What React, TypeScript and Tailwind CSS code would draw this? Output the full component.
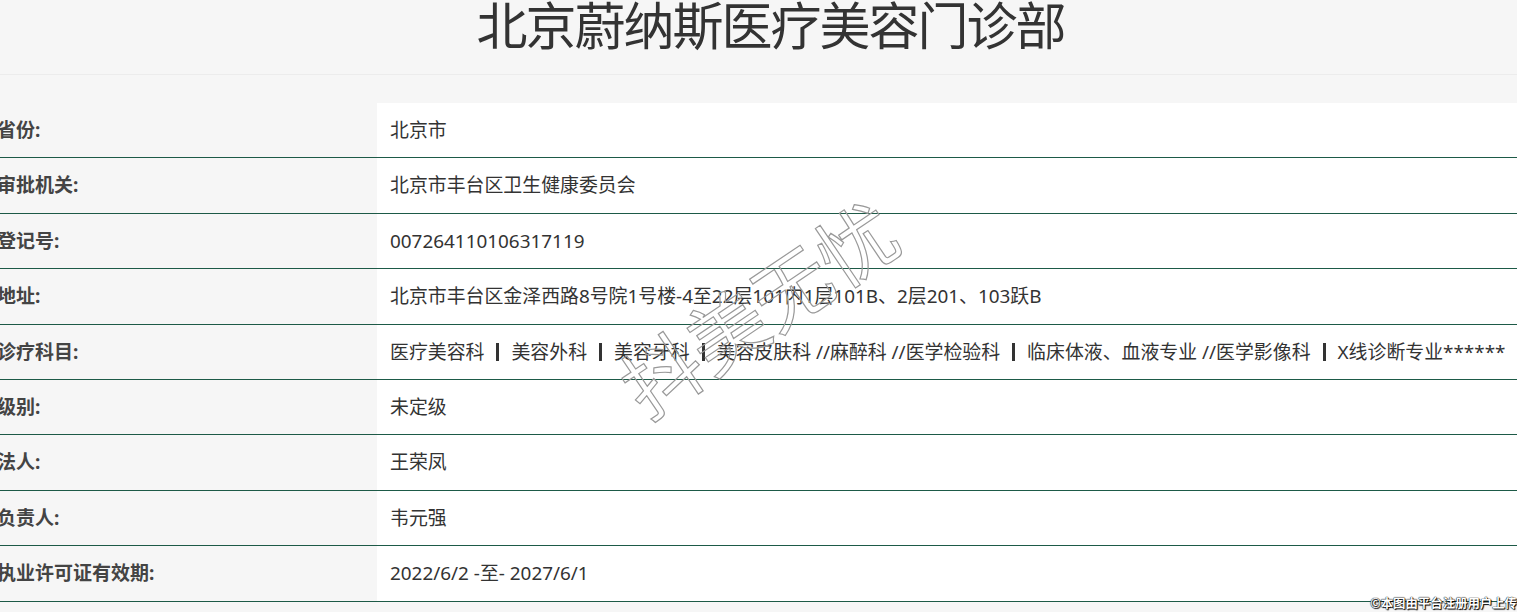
const rows: { label: string; value: React.ReactNode }[] = [
  { label: "省份:", value: "北京市" },
  { label: "审批机关:", value: "北京市丰台区卫生健康委员会" },
  { label: "登记号:", value: "007264110106317119" },
  { label: "地址:", value: "北京市丰台区金泽西路8号院1号楼-4至22层101内1层101B、2层201、103跃B" },
  {
    label: "诊疗科目:",
    value: (
      <>
        医疗美容科<Bar />美容外科<Bar />美容牙科<Bar />美容皮肤科 //麻醉科 //医学检验科<Bar />临床体液、血液专业 //医学影像科<Bar />X线诊断专业******
      </>
    ),
  },
  { label: "级别:", value: "未定级" },
  { label: "法人:", value: "王荣凤" },
  { label: "负责人:", value: "韦元强" },
  { label: "执业许可证有效期:", value: "2022/6/2 -至- 2027/6/1" },
];

function Bar() {
  return <span className="mx-[12px] inline-block h-[18px] w-[3px] bg-[#333]" />;
}

export default function App() {
  return (
    <div
      className="relative min-h-screen overflow-hidden bg-[#f6f6f6] text-[#333]"
      style={{ fontFamily: '"Noto Sans", "Noto Sans CJK SC", sans-serif' }}
    >
      <header className="h-[75px] overflow-hidden border-b border-[#ececec] pl-[24px]">
        <h1 className="-mt-[7px] text-center text-[51px] leading-[64px] tracking-[-2px] font-normal text-[#333]">
          北京蔚纳斯医疗美容门诊部
        </h1>
      </header>

      <div className="mt-[28px] -ml-[3px] w-[1520px]">
        {rows.map((r) => (
          <div key={r.label} className="flex h-[55.4px] border-b border-[#1d5a47]">
            <div className="flex w-[380px] shrink-0 items-center bg-[#f6f6f6] text-[19px] font-bold text-[#444]">
              {r.label}
            </div>
            <div className="flex flex-1 items-center whitespace-nowrap bg-white pl-[13px] text-[18.9px] text-[#333]">
              {r.value}
            </div>
          </div>
        ))}
      </div>

      <div className="pointer-events-none absolute left-[757px] top-[306px]">
        <div
          className="-translate-x-1/2 -translate-y-1/2 -rotate-[34deg] whitespace-nowrap text-[78px] leading-none text-transparent [-webkit-text-stroke:1.2px_#999]"
          style={{ fontFamily: '"Noto Sans CJK SC", sans-serif' }}
        >
          抖美无忧
        </div>
      </div>

      <div
        className="absolute right-0 top-[597px] text-[12.4px] leading-none font-bold text-white [text-shadow:0_0_1px_#000,0_0_1px_#000,1px_1px_1px_#000]"
        style={{ fontFamily: '"Noto Sans CJK SC", sans-serif' }}
      >
        ©本图由平台注册用户上传
      </div>
    </div>
  );
}
